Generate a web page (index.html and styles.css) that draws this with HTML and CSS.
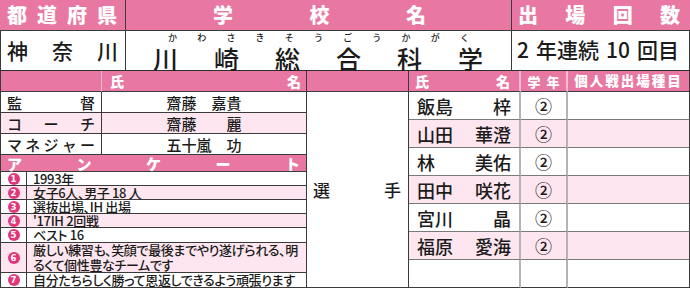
FILE: index.html
```html
<!DOCTYPE html>
<html lang="ja">
<head>
<meta charset="utf-8">
<title>川崎総合科学</title>
<link rel="stylesheet" href="styles.css">
</head>
<body>
<div class="sheet">
  <div class="top">
    <div class="hd pref-h"><span>都</span><span>道</span><span>府</span><span>県</span></div>
    <div class="hd school-h"><span>学</span><span>校</span><span>名</span></div>
    <div class="hd count-h"><span>出</span><span>場</span><span>回</span><span>数</span></div>
    <div class="val pref-v"><span>神</span><span>奈</span><span>川</span></div>
    <div class="val school-v">
      <div class="ruby"><span>か</span><span>わ</span><span>さ</span><span>き</span><span>そ</span><span>う</span><span>ご</span><span>う</span><span>か</span><span>が</span><span>く</span></div>
      <div class="kanji"><span>川</span><span>崎</span><span>総</span><span>合</span><span>科</span><span>学</span></div>
    </div>
    <div class="val count-v"><span>2</span><span>年連続</span><span>10</span><span>回目</span></div>
  </div>

  <div class="bottom">
    <div class="left">
      <div class="ph blank lsep"></div>
      <div class="ph spread nm-h"><span>氏</span><span>名</span></div>

      <div class="lab spread"><span>監</span><span>督</span></div>
      <div class="sname"><span>齋藤　嘉貴</span></div>
      <div class="lab spread pk"><span>コ</span><span>ー</span><span>チ</span></div>
      <div class="sname pk"><span>齋藤　　麗</span></div>
      <div class="lab spread"><span>マ</span><span>ネ</span><span>ジ</span><span>ャ</span><span>ー</span></div>
      <div class="sname"><span>五十嵐　功</span></div>

      <div class="ph spread enq-h"><span>ア</span><span>ン</span><span>ケ</span><span>ー</span><span>ト</span></div>

      <div class="items">
        <div class="item r14"><div class="num"><i>1</i></div><div class="txt">1993年</div></div>
        <div class="item r14 pk"><div class="num"><i>2</i></div><div class="txt">女子6人、男子 18 人</div></div>
        <div class="item r14"><div class="num"><i>3</i></div><div class="txt">選抜出場、IH 出場</div></div>
        <div class="item r14 pk"><div class="num"><i>4</i></div><div class="txt">'17IH 2回戦</div></div>
        <div class="item r15"><div class="num"><i>5</i></div><div class="txt">ベスト 16</div></div>
        <div class="item r30 pk"><div class="num"><i>6</i></div><div class="txt">厳しい練習も、笑顔で最後までやり遂げられる、明<br>るくて個性豊なチームです</div></div>
        <div class="item r15 last"><div class="num"><i>7</i></div><div class="txt">自分たちらしく勝って恩返しできるよう頑張ります</div></div>
      </div>
    </div>

    <div class="right">
      <div class="ph blank rsep-d"></div>
      <div class="ph spread pn-h"><span>氏</span><span>名</span></div>
      <div class="ph gr-h"><span>学</span><span>年</span></div>
      <div class="ph ev-h">個人戦出場種目</div>

      <div class="senshu spread"><span>選</span><span>手</span></div>

      <div class="pname"><span>飯島</span><span>梓</span></div><div class="grade">②</div><div class="event"></div>
      <div class="pname pk"><span>山田</span><span>華澄</span></div><div class="grade pk">②</div><div class="event pk"></div>
      <div class="pname"><span>林</span><span>美佑</span></div><div class="grade">②</div><div class="event"></div>
      <div class="pname pk"><span>田中</span><span>咲花</span></div><div class="grade pk">②</div><div class="event pk"></div>
      <div class="pname"><span>宮川</span><span>晶</span></div><div class="grade">②</div><div class="event"></div>
      <div class="pname pk"><span>福原</span><span>愛海</span></div><div class="grade pk">②</div><div class="event pk"></div>
      <div class="pname"></div><div class="grade"></div><div class="event"></div>
    </div>
  </div>
</div>
</body>
</html>
```

FILE: styles.css
```css
* {
  box-sizing: border-box;
  margin: 0;
  padding: 0;
}

body {
  margin: 0;
  background: #ffffff;
  font-family: "Noto Sans CJK JP", "Noto Sans", sans-serif;
  font-weight: 500;
  color: #1b1b1b;
}

.sheet {
  width: 690px;
  height: 290px;
  background: #ffffff;
}

/* ---------- top block ---------- */
.top {
  display: grid;
  grid-template-columns: 126px 386px 178px;
  grid-template-rows: 31px 40px;
}

.hd {
  background: #e878a2;
  color: #ffffff;
  font-weight: 900;
  font-size: 20px;
  line-height: 1;
  display: flex;
  align-items: center;
  justify-content: space-between;
  border-bottom: 1px solid #3a3a3a;
}

.pref-h {
  padding: 0 8px 0 7px;
  border-right: 1px solid #3a3a3a;
}

.school-h {
  padding: 0 85px 0 87px;
  border-right: 1px solid #3a3a3a;
}

.count-h {
  padding: 0 10px 0 6px;
}

.val {
  background: #ffffff;
  border-bottom: 1px solid #2e2e2e;
  border-right: 1px solid #3a3a3a;
  display: flex;
  align-items: center;
  justify-content: space-between;
  line-height: 1;
}

.pref-v {
  border-left: 1px solid #3a3a3a;
  padding: 0 7px 0 6px;
  font-size: 21px;
}

.school-v {
  flex-direction: column;
  align-items: stretch;
  justify-content: flex-start;
  padding-top: 2px;
}

.ruby {
  display: flex;
  justify-content: space-between;
  padding: 0 42px 0 42px;
  height: 9px;
  font-size: 9px;
  line-height: 9px;
}

.kanji {
  display: flex;
  justify-content: space-between;
  padding: 0 28px 0 27px;
  font-size: 25px;
  line-height: 25px;
  margin-top: 4px;
}

.count-v {
  padding: 0 10px 2px 5px;
  font-size: 21px;
}

/* ---------- bottom block ---------- */
.bottom {
  display: flex;
  height: 217px;
}

.left {
  width: 307px;
  border-left: 1px solid #3a3a3a;
  border-right: 1px solid #3a3a3a;
  display: grid;
  grid-template-columns: 101px 204px;
  grid-template-rows: 21px 21px 21px 21px 17px 116px;
}

.ph {
  background: #e878a2;
  color: #ffffff;
  font-weight: 900;
  font-size: 14px;
  line-height: 1;
  border-bottom: 1px solid #3a3a3a;
}

.spread {
  display: flex;
  align-items: center;
  justify-content: space-between;
}

.lsep {
  border-right: 1px solid #f4bcd1;
}

.nm-h {
  padding: 0 5px 0 8px;
}

.pk {
  background: #fde6ef;
}

.lab {
  padding: 0 6px 0 6px;
  font-size: 15px;
  line-height: 1;
  border-right: 1px solid #3a3a3a;
  border-bottom: 1px solid #3a3a3a;
}

.sname {
  display: flex;
  align-items: center;
  justify-content: center;
  font-size: 15px;
  line-height: 1;
  border-bottom: 1px solid #3a3a3a;
}

.enq-h {
  grid-column: 1 / span 2;
  padding: 0 6px 0 6px;
  font-size: 15px;
}

.items {
  grid-column: 1 / span 2;
  display: flex;
  flex-direction: column;
}

.item {
  display: grid;
  grid-template-columns: 26px 1fr;
  border-bottom: 1px solid #3a3a3a;
}

.r14 { height: 14px; }
.r15 { height: 15px; }
.r30 { height: 30px; }

.num {
  border-right: 1px solid #3a3a3a;
  display: flex;
  align-items: center;
  justify-content: center;
}

.num i {
  font-style: normal;
  width: 12px;
  height: 12px;
  border-radius: 50%;
  background: #e4357a;
  color: #ffffff;
  font-family: "DejaVu Sans", sans-serif;
  font-weight: 700;
  font-size: 8.5px;
  line-height: 12px;
  text-align: center;
}

.txt {
  padding-left: 6px;
  font-size: 13px;
  line-height: 14px;
  letter-spacing: -0.35px;
  font-feature-settings: "palt";
  display: flex;
  align-items: center;
  white-space: nowrap;
}

.r30 .txt {
  display: block;
  padding-top: 0;
  line-height: 14.5px;
}

/* ---------- players ---------- */
.right {
  width: 383px;
  display: grid;
  grid-template-columns: 102px 112px 47px 122px;
  grid-template-rows: 21px repeat(7, 28px);
}

.rsep-d {
  border-right: 1px solid #3a3a3a;
}

.pn-h {
  padding: 0 9px 0 6px;
  border-right: 2px solid #f4bcd1;
}

.gr-h {
  display: flex;
  align-items: center;
  justify-content: center;
  gap: 6px;
  border-right: 2px solid #f4bcd1;
  font-size: 13px;
}

.ev-h {
  display: flex;
  align-items: center;
  justify-content: center;
  font-size: 13.5px;
  letter-spacing: 2px;
  border-right: 1px solid #3a3a3a;
}

.senshu {
  grid-column: 1;
  grid-row: 2 / span 7;
  padding: 0 7px 0 6px;
  font-size: 17px;
  line-height: 1;
  border-right: 1px solid #3a3a3a;
  border-bottom: 1px solid #3a3a3a;
}

.pname {
  display: flex;
  align-items: center;
  justify-content: space-between;
  padding: 0 8px 0 8px;
  font-size: 18px;
  line-height: 1;
  border-right: 2px solid #b4b4b4;
  border-bottom: 1px solid #7a7a7a;
}

.grade {
  display: flex;
  align-items: center;
  justify-content: center;
  font-size: 17px;
  line-height: 1;
  border-right: 2px solid #b4b4b4;
  border-bottom: 1px solid #7a7a7a;
}

.event {
  border-right: 1px solid #3a3a3a;
  border-bottom: 1px solid #7a7a7a;
}

.right > :nth-last-child(-n+3) {
  border-bottom-color: #3a3a3a;
}
```
